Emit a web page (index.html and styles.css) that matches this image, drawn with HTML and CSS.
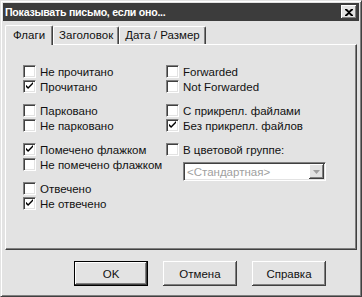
FILE: index.html
```html
<!DOCTYPE html>
<html>
<head>
<meta charset="utf-8">
<link rel="stylesheet" href="styles.css">
</head>
<body>
<div class="dialog">
  <div class="titlebar">
    <span class="title">Показывать письмо, если оно...</span>
    <span class="close"><svg width="8" height="7" viewBox="0 0 8 7"><path d="M0 0h2l2 2 2-2h2v1L5 3.5 8 6v1H6L4 5 2 7H0V6l3-2.5L0 1z" fill="#000"/></svg></span>
  </div>
  <div class="tabs">
    <div class="tab active">Флаги</div>
    <div class="tab">Заголовок</div>
    <div class="tab">Дата / Размер</div>
  </div>
  <div class="panel">
    <div class="cols">
      <div class="col">
        <div class="group">
          <label class="cb"><span class="box"></span>Не прочитано</label>
          <label class="cb"><span class="box checked"></span>Прочитано</label>
        </div>
        <div class="group">
          <label class="cb"><span class="box"></span>Парковано</label>
          <label class="cb"><span class="box"></span>Не парковано</label>
        </div>
        <div class="group">
          <label class="cb"><span class="box checked"></span>Помечено флажком</label>
          <label class="cb"><span class="box"></span>Не помечено флажком</label>
        </div>
        <div class="group">
          <label class="cb"><span class="box"></span>Отвечено</label>
          <label class="cb"><span class="box checked"></span>Не отвечено</label>
        </div>
      </div>
      <div class="col right">
        <div class="group">
          <label class="cb"><span class="box"></span>Forwarded</label>
          <label class="cb"><span class="box"></span>Not Forwarded</label>
        </div>
        <div class="group">
          <label class="cb"><span class="box"></span>С прикрепл. файлами</label>
          <label class="cb"><span class="box checked"></span>Без прикрепл. файлов</label>
        </div>
        <div class="group">
          <label class="cb"><span class="box"></span>В цветовой группе:</label>
          <div class="combo">
            <span class="combo-text">&lt;Стандартная&gt;</span>
            <span class="combo-btn"><svg width="7" height="4" viewBox="0 0 7 4"><path d="M0 0h7L3.5 4z" fill="#a0a0a0"/></svg></span>
          </div>
        </div>
      </div>
    </div>
  </div>
  <div class="buttons">
    <div class="btn default">OK</div>
    <div class="btn">Отмена</div>
    <div class="btn">Справка</div>
  </div>
</div>
</body>
</html>
```
FILE: styles.css
```css
* { box-sizing: border-box; }
html, body { margin: 0; padding: 0; background: #e3e3e3; }
body { font-family: "Liberation Sans", Arial, sans-serif; font-size: 11px; color: #111; }
.dialog {
  width: 362px; height: 297px;
  background: #e3e3e3;
  border-top: 1px solid #e3e3e3; border-left: 1px solid #e3e3e3;
  border-right: 1px solid #404040; border-bottom: 1px solid #404040;
  box-shadow: inset 1px 1px 0 #fff, inset -1px -1px 0 #808080;
  padding: 2px;
  display: flex; flex-direction: column;
}
.titlebar {
  height: 18px; background: #3c3c3c; flex: none;
  display: flex; align-items: center; justify-content: space-between;
  padding: 0 2px 0 2px;
}
.title { color: #fff; font-weight: bold; font-size: 10.6px; letter-spacing: -0.25px; }
.close {
  width: 16px; height: 14px; background: #e3e3e3;
  display: flex; align-items: center; justify-content: center;
  box-shadow: inset -1px -1px 0 #404040, inset 1px 1px 0 #fff, inset -2px -2px 0 #808080;
}
.tabs { display: flex; padding: 4px 0 0 4px; height: 23px; flex: none; align-items: flex-end; position: relative; z-index: 1; }
.tab {
  height: 18px; padding: 0 5px; line-height: 17px;
  border-top: 1px solid #fff; border-left: 1px solid #fff;
  border-right: 1px solid #404040;
  box-shadow: inset -1px 0 0 #808080;
  border-radius: 2px 2px 0 0;
  font-size: 11.5px;
}
.tab.active { height: 20px; margin-bottom: -1px; padding: 0 7px; margin-left: -2px; line-height: 19px; background: #e3e3e3; }
.panel {
  margin: 0 2px 0 2px; height: 206px; flex: none;
  border-top: 1px solid #fff; border-left: 1px solid #fff;
  border-right: 1px solid #404040; border-bottom: 1px solid #404040;
  box-shadow: inset -1px -1px 0 #808080;
  padding: 19px 0 0 17px;
}
.cols { display: flex; }
.col { width: 143px; display: flex; flex-direction: column; gap: 9px; }
.group { display: flex; flex-direction: column; }
.cb { display: flex; align-items: center; height: 15px; font-size: 11.5px; white-space: nowrap; }
.box {
  width: 13px; height: 13px; background: #fff; margin-right: 4px; flex: none;
  border-top: 1px solid #808080; border-left: 1px solid #808080;
  border-right: 1px solid #fff; border-bottom: 1px solid #fff;
  box-shadow: inset 1px 1px 0 #404040, inset -1px -1px 0 #e3e3e3;
  position: relative;
}
.box.checked::after {
  content: ""; position: absolute; left: 2px; top: 1px;
  width: 7px; height: 7px;
  background: #000;
  clip-path: polygon(0 40%, 30% 70%, 100% 0, 100% 30%, 30% 100%, 0 70%);
}
.combo {
  margin: 5px 0 0 17px; width: 143px; height: 19px;
  background: #fff; display: flex; align-items: center; justify-content: space-between;
  border-top: 1px solid #808080; border-left: 1px solid #808080;
  border-right: 1px solid #fff; border-bottom: 1px solid #fff;
  box-shadow: inset 1px 1px 0 #404040, inset -1px -1px 0 #e3e3e3;
  padding: 1px 1px 1px 3px;
}
.combo-text { color: #a0a0a0; font-size: 11.5px; }
.combo-btn {
  width: 15px; height: 15px; background: #e3e3e3;
  display: flex; align-items: center; justify-content: center;
  box-shadow: inset -1px -1px 0 #404040, inset 1px 1px 0 #fff, inset -2px -2px 0 #808080;
}
.buttons { display: flex; justify-content: flex-end; gap: 15px; padding: 11px 33px 0 0; }
.btn {
  width: 74px; height: 25px; display: flex; align-items: center; justify-content: center;
  font-size: 11.5px;
  box-shadow: inset -1px -1px 0 #404040, inset 1px 1px 0 #fff, inset -2px -2px 0 #808080;
}
.btn.default {
  border: 1px solid #000;
}
```
